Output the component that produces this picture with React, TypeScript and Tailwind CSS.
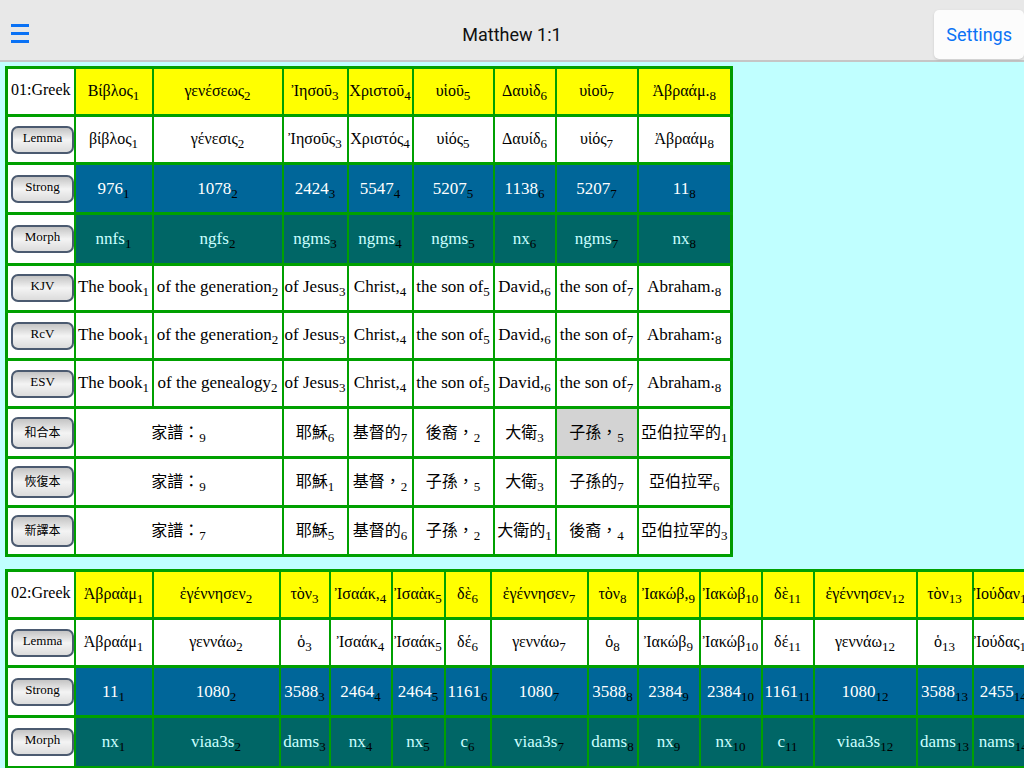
import React from "react";

type Tone = "greek" | "plain" | "lemma" | "strong" | "morph" | "han";
type Cell = { t: string; n: number; span?: number; mark?: boolean };
type Row = { label: string; tone: Tone; height: string; cells: Cell[] };
type Verse = { id: string; title: string; cols: string[]; width: string; rows: Row[] };

/** Splits "word|1" entries into text and word order number. */
function cells(...items: string[]): Cell[] {
  return items.map((item) => {
    const [t, n] = item.split("|");
    return { t, n: Number(n) };
  });
}

const verses: Verse[] = [
  {
    id: "v1",
    title: "01:Greek",
    width: "w-[727px]",
    cols: ["w-[68px]", "w-[78px]", "w-[130px]", "w-[65px]", "w-[65px]", "w-[81px]", "w-[62px]", "w-[82px]", "w-[94px]"],
    rows: [
      { label: "", tone: "greek", height: "h-[48px]", cells: cells("Βίβλος|1", "γενέσεως|2", "Ἰησοῦ|3", "Χριστοῦ|4", "υἱοῦ|5", "Δαυὶδ|6", "υἱοῦ|7", "Ἀβραάμ.|8") },
      { label: "Lemma", tone: "lemma", height: "h-[48px]", cells: cells("βίβλος|1", "γένεσις|2", "Ἰησοῦς|3", "Χριστός|4", "υἱός|5", "Δαυίδ|6", "υἱός|7", "Ἀβραάμ|8") },
      { label: "Strong", tone: "strong", height: "h-[50px]", cells: cells("976|1", "1078|2", "2424|3", "5547|4", "5207|5", "1138|6", "5207|7", "11|8") },
      { label: "Morph", tone: "morph", height: "h-[51px]", cells: cells("nnfs|1", "ngfs|2", "ngms|3", "ngms|4", "ngms|5", "nx|6", "ngms|7", "nx|8") },
      { label: "KJV", tone: "plain", height: "h-[47px]", cells: cells("The book|1", "of the generation|2", "of Jesus|3", "Christ,|4", "the son of|5", "David,|6", "the son of|7", "Abraham.|8") },
      { label: "RcV", tone: "plain", height: "h-[48px]", cells: cells("The book|1", "of the generation|2", "of Jesus|3", "Christ,|4", "the son of|5", "David,|6", "the son of|7", "Abraham:|8") },
      { label: "ESV", tone: "plain", height: "h-[48px]", cells: cells("The book|1", "of the genealogy|2", "of Jesus|3", "Christ,|4", "the son of|5", "David,|6", "the son of|7", "Abraham.|8") },
      {
        label: "和合本", tone: "han", height: "h-[50px]",
        cells: [{ t: "家譜：", n: 9, span: 2 }, ...cells("耶穌|6", "基督的|7", "後裔，|2", "大衛|3"), { t: "子孫，", n: 5, mark: true }, ...cells("亞伯拉罕的|1")],
      },
      {
        label: "恢復本", tone: "han", height: "h-[49px]",
        cells: [{ t: "家譜：", n: 9, span: 2 }, ...cells("耶穌|1", "基督，|2", "子孫，|5", "大衛|3", "子孫的|7", "亞伯拉罕|6")],
      },
      {
        label: "新譯本", tone: "han", height: "h-[49px]",
        cells: [{ t: "家譜：", n: 7, span: 2 }, ...cells("耶穌|5", "基督的|6", "子孫，|2", "大衛的|1", "後裔，|4", "亞伯拉罕的|3")],
      },
    ],
  },
  {
    id: "v2",
    title: "02:Greek",
    width: "w-[1030px]",
    cols: ["w-[68px]", "w-[78px]", "w-[127px]", "w-[50px]", "w-[62px]", "w-[53px]", "w-[46px]", "w-[97px]", "w-[50px]", "w-[62px]", "w-[62px]", "w-[52px]", "w-[103px]", "w-[56px]", "w-[62px]"],
    rows: [
      { label: "", tone: "greek", height: "h-[48px]", cells: cells("Ἀβραὰμ|1", "ἐγέννησεν|2", "τὸν|3", "Ἰσαάκ,|4", "Ἰσαὰκ|5", "δὲ|6", "ἐγέννησεν|7", "τὸν|8", "Ἰακώβ,|9", "Ἰακὼβ|10", "δὲ|11", "ἐγέννησεν|12", "τὸν|13", "Ἰούδαν|14") },
      { label: "Lemma", tone: "lemma", height: "h-[48px]", cells: cells("Ἀβραάμ|1", "γεννάω|2", "ὁ|3", "Ἰσαάκ|4", "Ἰσαάκ|5", "δέ|6", "γεννάω|7", "ὁ|8", "Ἰακώβ|9", "Ἰακώβ|10", "δέ|11", "γεννάω|12", "ὁ|13", "Ἰούδας|14") },
      { label: "Strong", tone: "strong", height: "h-[50px]", cells: cells("11|1", "1080|2", "3588|3", "2464|4", "2464|5", "1161|6", "1080|7", "3588|8", "2384|9", "2384|10", "1161|11", "1080|12", "3588|13", "2455|14") },
      { label: "Morph", tone: "morph", height: "h-[51px]", cells: cells("nx|1", "viaa3s|2", "dams|3", "nx|4", "nx|5", "c|6", "viaa3s|7", "dams|8", "nx|9", "nx|10", "c|11", "viaa3s|12", "dams|13", "nams|14") },
    ],
  },
];

const toneClass: Record<Tone, string> = {
  greek: "bg-[#ffff00] pb-[2px] text-[16px] text-black",
  plain: "bg-white pb-[2px] text-[17px] text-black",
  lemma: "bg-white pb-[2px] text-[16px] text-black",
  strong: "bg-[#006699] pb-0 text-[17px] text-white",
  morph: "bg-[#006666] pb-0 text-[17px] text-[#ccffff]",
  han: "bg-white pb-0 text-[16px] text-black",
};

function VersionButton({ label, han }: { label: string; han: boolean }) {
  return (
    <button
      type="button"
      className={`ml-[3px] flex w-[63px] justify-center rounded-[7px] border-2 border-[#4b5a70] bg-linear-to-b from-[#c4c4c4] via-[#f4f4f4] to-[#dcdcdc] text-black ${
        han ? "h-8 items-center text-[12px]" : "h-7 items-start text-[13px] leading-5"
      }`}
    >
      {label}
    </button>
  );
}

function VerseTable({ verse }: { verse: Verse }) {
  const edge = "border-x-2 border-y-[3px] border-[#00a000] px-0 pt-0";
  return (
    <table className={`${verse.width} table-fixed border-collapse border-[3px] border-[#009900] text-center whitespace-nowrap`}>
      <colgroup>
        {verse.cols.map((w, i) => (
          <col key={i} className={w} />
        ))}
      </colgroup>
      <tbody>
        {verse.rows.map((row, r) => (
          <tr key={r} className={row.height}>
            <th scope="row" className={`${edge} bg-white text-[16px] font-normal ${row.label ? "pb-0" : "pb-1"}`}>
              {row.label ? <VersionButton label={row.label} han={row.tone === "han"} /> : verse.title}
            </th>
            {row.cells.map((cell, c) => (
              <td key={c} colSpan={cell.span} className={`${edge} ${toneClass[row.tone]} ${cell.mark ? "bg-[#d3d3d3]!" : ""}`}>
                {cell.t}
                <sub className="bottom-[-4px] text-[13px] text-black">{cell.n}</sub>
              </td>
            ))}
          </tr>
        ))}
      </tbody>
    </table>
  );
}

export default function App() {
  return (
    <div className="flex h-screen flex-col overflow-hidden bg-[#c0ffff] font-['Liberation_Serif','Noto_Sans_CJK_TC',serif]">
      <header className="grid h-[62px] shrink-0 grid-cols-3 items-center border-b-2 border-[#c6c6c6] bg-[#e8e8e8] pt-2 font-['Roboto',sans-serif]">
        <button type="button" aria-label="Menu" className="ml-[11px] justify-self-start text-[#0a72f5]">
          <svg width="18" height="20" viewBox="0 0 18 20" fill="currentColor" aria-hidden="true">
            <rect x="0" y="0" width="18" height="3" />
            <rect x="0" y="8" width="18" height="3" />
            <rect x="0" y="16" width="18" height="3" />
          </svg>
        </button>
        <h1 className="text-center text-[18px] text-[#111111]">Matthew 1:1</h1>
        <button type="button" className="h-[49px] justify-self-end rounded-[5px] bg-[#fcfcfc] px-3 text-[18px] text-[#0a72f5] shadow">
          Settings
        </button>
      </header>
      <main className="flex flex-1 flex-col items-start gap-3 overflow-hidden pt-1 pl-[5px]">
        {verses.map((verse) => (
          <VerseTable key={verse.id} verse={verse} />
        ))}
      </main>
    </div>
  );
}
